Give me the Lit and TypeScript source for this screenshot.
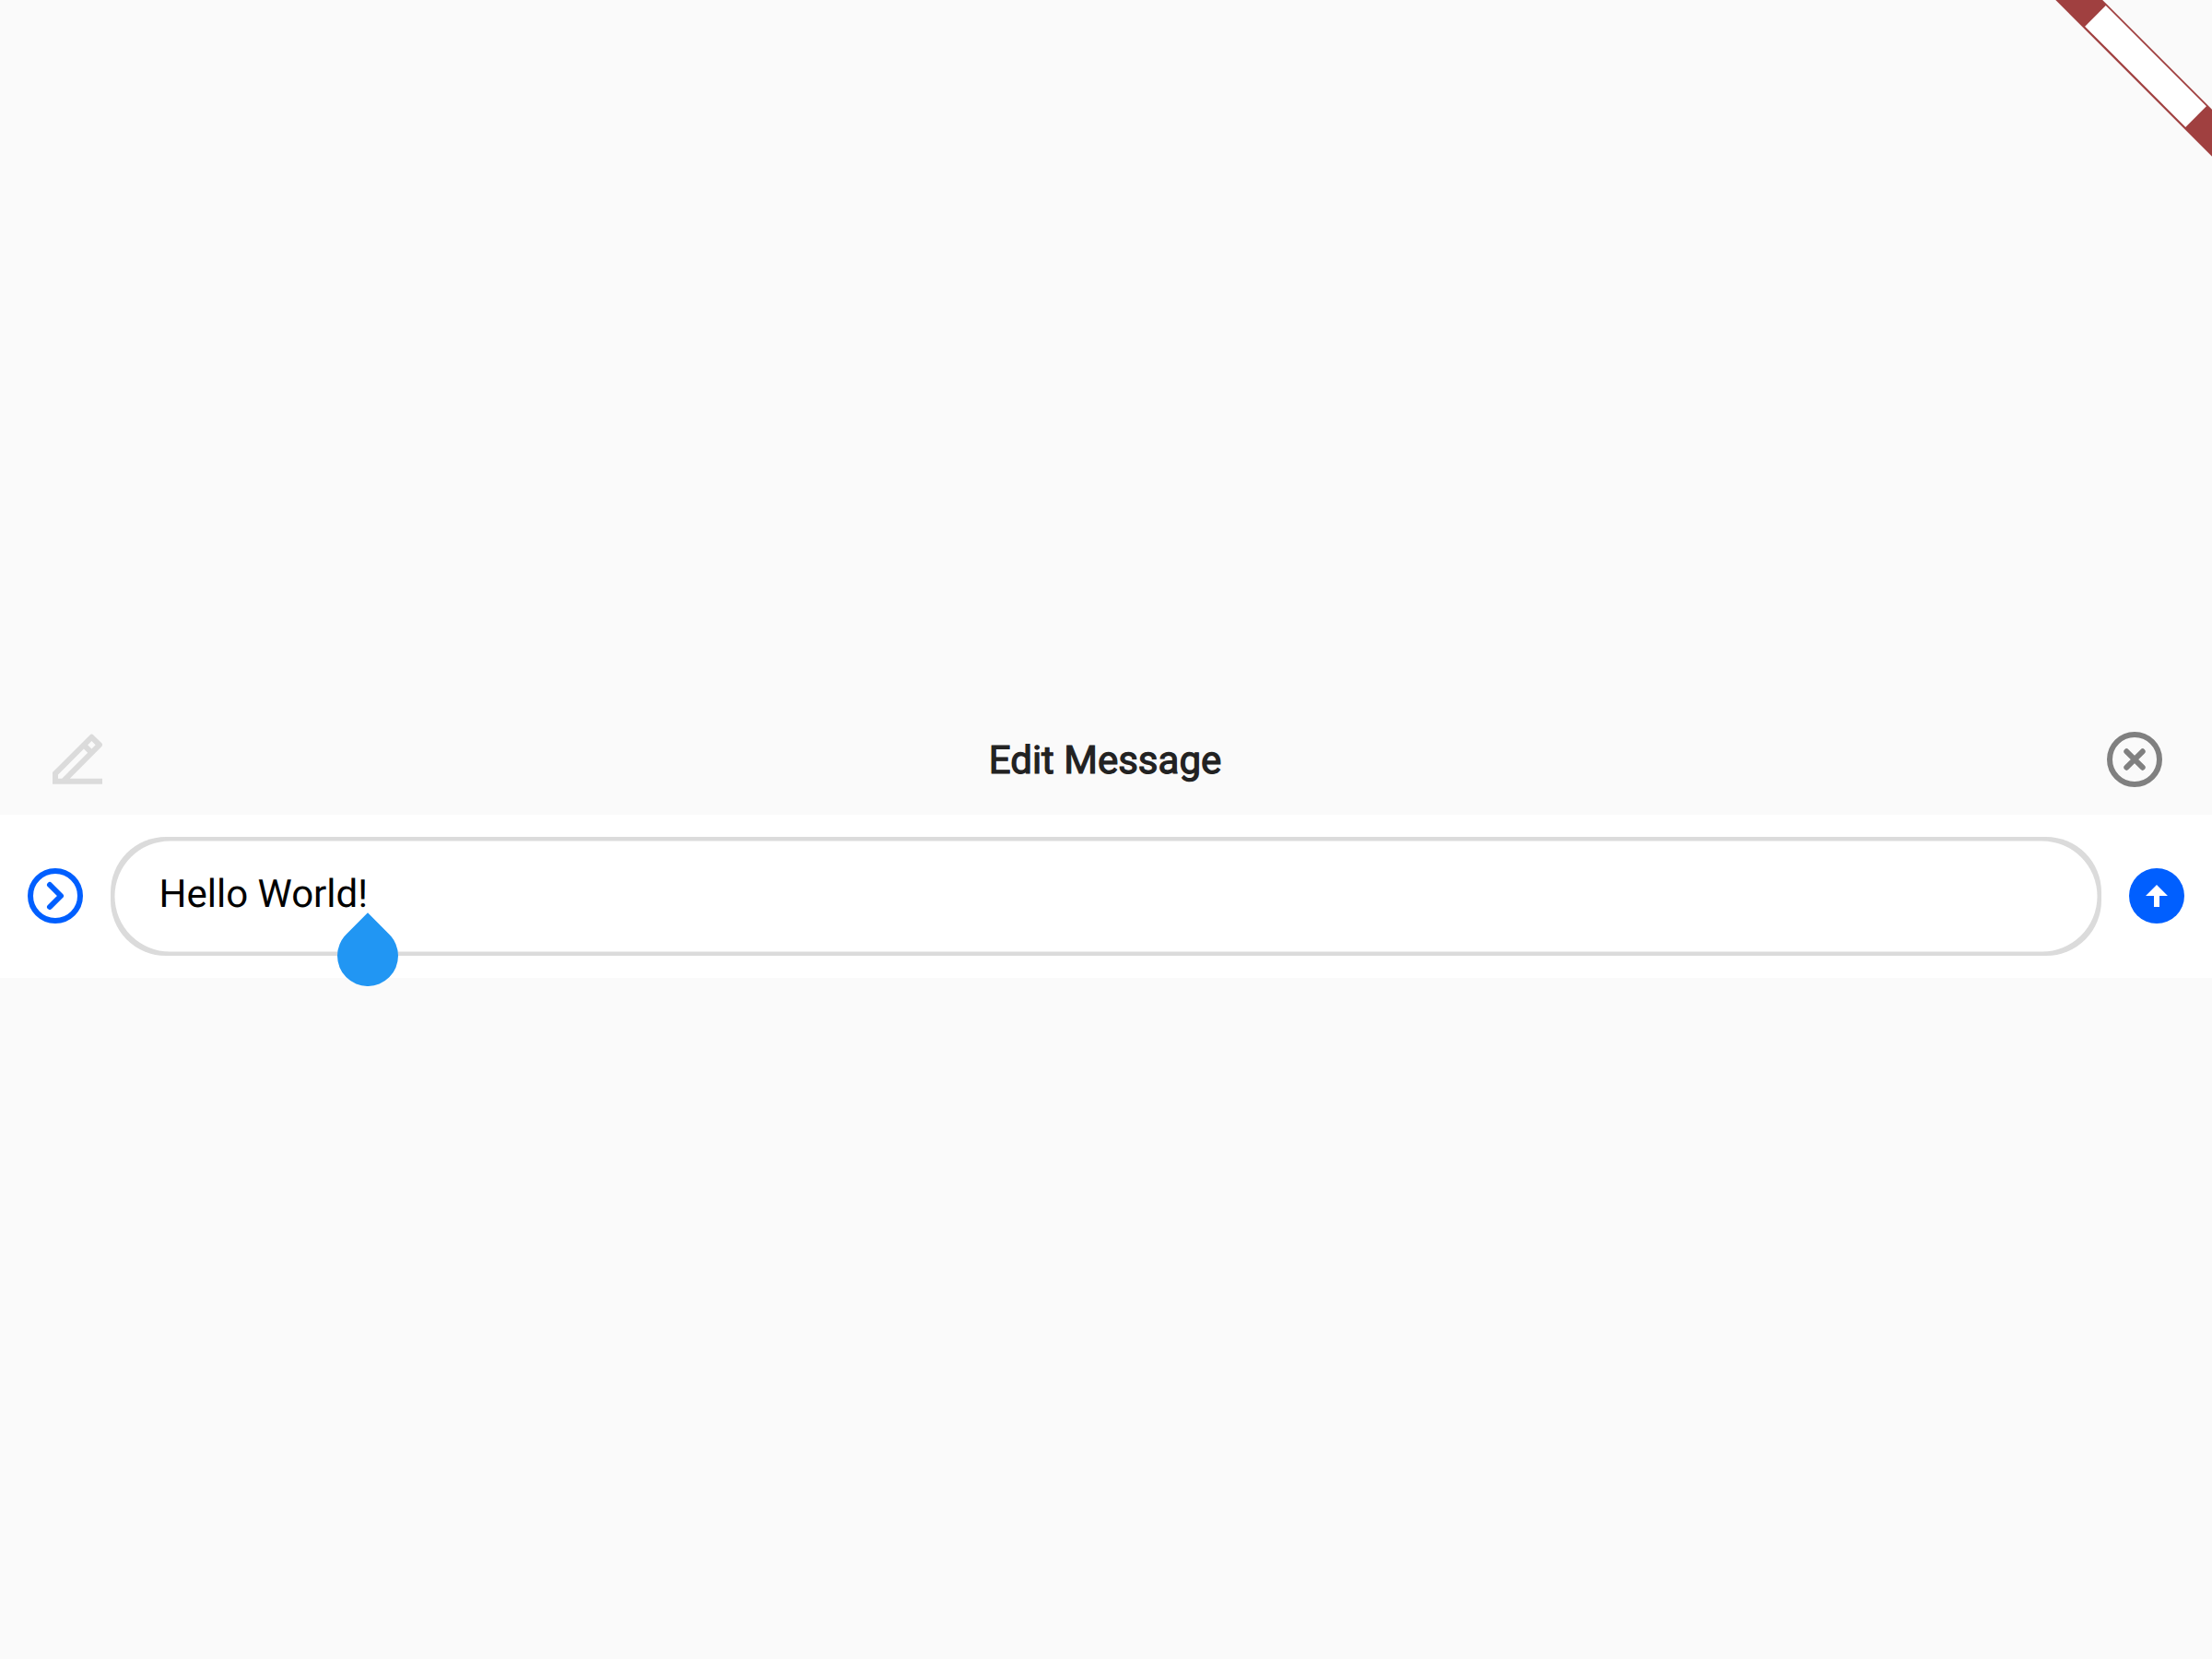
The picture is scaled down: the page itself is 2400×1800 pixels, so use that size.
import { LitElement, html, css } from "lit";
import { customElement, property } from "lit/decorators.js";

@customElement("debug-banner")
class DebugBanner extends LitElement {
  static styles = css`
    :host { display: block; width: 170px; height: 170px; }
    svg { display: block; }
    .band { fill: #a04040; }
    .label { fill: #ffffff; }
  `;
  render() {
    return html`<svg width="170" height="170" viewBox="0 0 170 170">
      <g transform="translate(170 0) rotate(45)">
        <rect class="band" x="-120" y="84" width="240" height="36" />
        <rect class="label" x="-77.2" y="85.8" width="154.4" height="32" />
      </g>
    </svg>`;
  }
}

@customElement("edit-header")
class EditHeader extends LitElement {
  @property() heading = "";
  static styles = css`
    :host {
      display: flex;
      align-items: center;
      justify-content: space-between;
      height: 120px;
      padding: 0 48px;
      box-sizing: border-box;
    }
    svg { display: block; }
    .pencil { fill: #dbdbdb; }
    .close { fill: none; stroke: #808080; stroke-width: 6; stroke-linecap: round; }
    .heading {
      margin: 4px 2px 0 0;
      font-size: 42px;
      line-height: 48px;
      color: #222222;
      -webkit-text-stroke: 1.2px #222222;
      text-rendering: geometricPrecision;
      white-space: nowrap;
    }
  `;
  render() {
    return html`
      <svg class="pencil" width="72" height="72" viewBox="0 0 24 24">
        <path d="M5 18.89h1.414l9.314-9.314-1.414-1.414L5 17.476v1.414zm16 2H3v-4.243L16.435 3.212a1 1 0 0 1 1.414 0l2.829 2.829a1 1 0 0 1 0 1.414L9.243 18.89H21v2zM15.728 6.748l1.414 1.414 1.414-1.414-1.414-1.414-1.414 1.414z" />
      </svg>
      <span class="heading">${this.heading}</span>
      <svg class="close" width="72" height="72" viewBox="0 0 72 72">
        <circle cx="36" cy="36" r="27" />
        <path d="M27.3 27.3L44.7 44.7M44.7 27.3L27.3 44.7" />
      </svg>
    `;
  }
}

@customElement("message-bar")
class MessageBar extends LitElement {
  @property() text = "";
  static styles = css`
    :host {
      display: flex;
      align-items: center;
      gap: 30px;
      height: 177px;
      padding: 24px 30px;
      box-sizing: border-box;
      background: #ffffff;
    }
    svg { display: block; flex: none; }
    .action { margin-top: -1px; }
    .expand { fill: none; stroke: #005fff; stroke-width: 6; stroke-linecap: round; stroke-linejoin: round; }
    .disc { fill: #005fff; }
    .arrow { fill: #ffffff; }
    .field {
      position: relative;
      flex: 1;
      height: 129px;
      box-sizing: border-box;
      padding: 38px 52.5px 0;
    }
    .frame { position: absolute; inset: 0; width: 100%; height: 100%; }
    .rim { fill: #dbdbdb; }
    .inner { fill: #ffffff; width: calc(100% - 9px); height: calc(100% - 9px); }
    .value {
      position: relative;
      display: inline-block;
      font-size: 42px;
      line-height: 50px;
      color: #000000;
      text-rendering: geometricPrecision;
      white-space: nowrap;
    }
    .handle { position: absolute; left: calc(100% - 33px); top: 42px; }
    .drop { fill: #2196f3; }
  `;
  render() {
    return html`
      <svg class="action expand" width="60" height="60" viewBox="0 0 60 60">
        <circle cx="30" cy="30" r="27" />
        <path d="M24 18L36 30L24 42" />
      </svg>
      <div class="field">
        <svg class="frame">
          <rect class="rim" width="100%" height="100%" rx="60" />
          <rect class="inner" x="4.5" y="4.5" rx="60" />
        </svg>
        <span class="value">${this.text}<svg class="handle" width="66" height="82" viewBox="0 0 66 82">
            <path class="drop" d="M33 2.33L56.33 25.67A33 33 0 1 1 9.67 25.67Z" />
          </svg></span>
      </div>
      <svg class="action" width="60" height="60" viewBox="0 0 60 60">
        <circle class="disc" cx="30" cy="30" r="30" />
        <path class="arrow" d="M30 18L42 30H33V42H27V30H18Z" />
      </svg>
    `;
  }
}

@customElement("app-root")
class AppRoot extends LitElement {
  static styles = css`
    :host {
      position: relative;
      display: flex;
      flex-direction: column;
      height: 1800px;
      padding-top: 764px;
      box-sizing: border-box;
      background: #fafafa;
      font-family: Roboto, "Liberation Sans", sans-serif;
    }
    .banner { position: absolute; top: 0; right: 0; }
  `;
  render() {
    return html`
      <edit-header heading="Edit Message"></edit-header>
      <message-bar text="Hello World!"></message-bar>
      <debug-banner class="banner"></debug-banner>
    `;
  }
}
